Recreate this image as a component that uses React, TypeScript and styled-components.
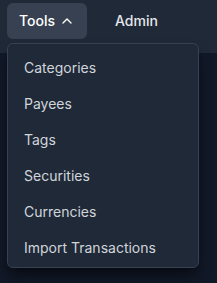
import React from "react";
import styled, { createGlobalStyle } from "styled-components";
import { ChevronUp } from "lucide-react";

const Global = createGlobalStyle`
  html, body { margin: 0; padding: 0; background: #111827; }
  body { font-family: Inter, "Noto Sans", sans-serif; -webkit-font-smoothing: antialiased; }
  * { box-sizing: border-box; }
`;

const Page = styled.div`
  width: 217px;
  height: 283px;
  background: #111827;
  position: relative;
  overflow: hidden;
`;

const Header = styled.nav`
  height: 53px;
  background: #1f2937;
  display: flex;
  align-items: flex-start;
  gap: 16px;
  padding: 3px 0 0 7px;
`;

const MenuWrap = styled.div`
  position: relative;
`;

const NavButton = styled.button<{ $active?: boolean }>`
  display: flex;
  align-items: center;
  gap: 4px;
  height: 36px;
  padding: 0 12px;
  border: none;
  border-radius: 6px;
  background: ${(p) => (p.$active ? "#374151" : "transparent")};
  color: ${(p) => (p.$active ? "#ffffff" : "#e5e7eb")};
  font-family: Inter, sans-serif;
  font-size: 14px;
  font-weight: 500;
  line-height: 20px;
  cursor: pointer;
`;

const Dropdown = styled.div`
  position: absolute;
  top: 40px;
  left: 0;
  width: 192px;
  background: #1f2937;
  border: 1px solid #374151;
  border-radius: 6px;
  padding: 6px 0 1px;
  box-shadow: 0 10px 15px -3px rgba(0, 0, 0, 0.5), 0 4px 6px -4px rgba(0, 0, 0, 0.4);
  z-index: 10;
`;

const Item = styled.a`
  display: block;
  padding: 8px 16px;
  font-size: 14px;
  line-height: 20px;
  color: #d1d5db;
  text-decoration: none;
  white-space: nowrap;
`;

const items = ["Categories", "Payees", "Tags", "Securities", "Currencies", "Import Transactions"];

export default function App() {
  return (
    <Page>
      <Global />
      <Header>
        <MenuWrap>
          <NavButton $active>
            Tools
            <ChevronUp size={16} strokeWidth={2} />
          </NavButton>
          <Dropdown>
            {items.map((i) => (
              <Item key={i} href="#">
                {i}
              </Item>
            ))}
          </Dropdown>
        </MenuWrap>
        <NavButton>Admin</NavButton>
      </Header>
    </Page>
  );
}
